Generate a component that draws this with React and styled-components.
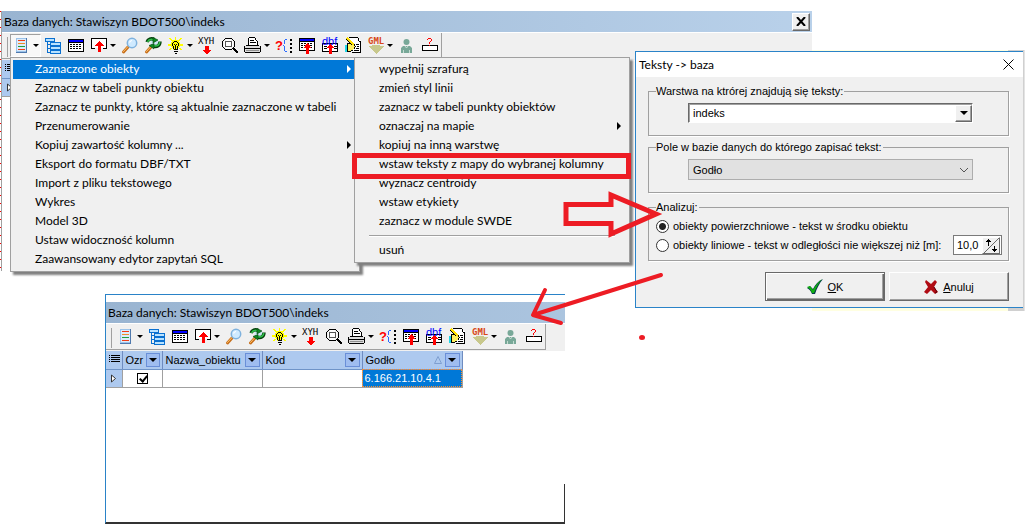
import React from 'react'
import styled, { createGlobalStyle, css } from 'styled-components'

const UI_FONT = 'Lato, "Open Sans", sans-serif'
const CLASSIC_FONT = '"Liberation Sans", Arial, sans-serif'

const FACE = '#f0f0f0'
const SHADOW = '#a0a0a0'
const BLUE = '#0078d7'
const FRAME = '#2a83c8'
const RED = '#ed1c24'

const GlobalStyle = createGlobalStyle`
  * { box-sizing: border-box; }
  body {
    margin: 0;
    background: #fff;
    color: #000;
    font-family: ${UI_FONT};
    font-size: 12px;
  }
  button, input, select { font: inherit; color: inherit; }
`

const Desktop = styled.main`
  position: relative;
  min-height: 100vh;
  overflow: hidden;
`

const MapEdge = styled.div`
  position: absolute;
  left: 0;
  top: 11px;
  width: 2px;
  height: 260px;
  background: repeating-linear-gradient(#f00 0 1px, #fff 1px 8px);
  border-right: 1px solid ${SHADOW};
`

const DataWindow = styled.section`
  position: absolute;
  background: #fff;
  ${({ $place }) =>
    $place === 'back'
      ? css`
          left: 2px;
          top: 11px;
          right: 21%;
          min-height: 260px;
        `
      : css`
          left: 105px;
          top: 294px;
          right: 45%;
          min-width: 460px;
          min-height: 230px;
          padding-top: 7px;
          border-top: 1px solid ${FRAME};
          border-left: 1px solid ${FRAME};
          border-bottom: 2px solid #333;

          &::after {
            content: '';
            position: absolute;
            right: 0;
            bottom: 0;
            height: 38px;
            border-right: 1px solid #333;
          }
        `};
`

const TitleBar = styled.header`
  display: flex;
  align-items: center;
  justify-content: space-between;
  height: 21px;
  padding: 0 2px;
  background: linear-gradient(90deg, #99b4d1, #b9d1ea) 0 0 / 812px 100%;
`

const WindowTitle = styled.h2`
  margin: 0;
  font-size: 12px;
  line-height: 20px;
  font-weight: normal;
  white-space: nowrap;
`

const RaisedClose = styled.button`
  display: grid;
  place-items: center;
  width: 18px;
  height: 18px;
  padding: 0;
  background: ${FACE};
  border: 1px solid;
  border-color: #fff #696969 #696969 #fff;
  box-shadow: inset -1px -1px ${SHADOW};
`

const ToolStrip = styled.div`
  height: 28px;
  background: ${FACE};
  border-top: 1px solid #fff;
`

const ToolGroup = styled.div`
  display: flex;
  width: max-content;
  height: 26px;
  padding: 1px 0 0 8px;
  border-right: 1px solid ${SHADOW};
  border-bottom: 1px solid ${SHADOW};
  background: linear-gradient(${SHADOW}, ${SHADOW}) 5px 4px / 1px 20px no-repeat;
`

const ToolButton = styled.button`
  display: flex;
  align-items: center;
  width: ${({ $split }) => ($split ? 31 : 23)}px;
  height: 23px;
  padding: 0 0 0 2px;
  border: 1px solid transparent;
  background: none;
  ${({ $pressed }) =>
    $pressed &&
    css`
      background: #f8f8f8;
      border-color: ${SHADOW} #fff #fff ${SHADOW};
    `};

  svg {
    flex: none;
    overflow: visible;
  }
`

const Caret = styled.span`
  flex: none;
  margin-left: ${({ $gap = 0 }) => $gap}px;
  border: 3px solid transparent;
  border-top-color: currentColor;
  border-bottom: 0;
`

const Menu = styled.ul`
  position: absolute;
  top: 57px;
  left: ${({ $left }) => $left}px;
  width: ${({ $width }) => $width}px;
  margin: 0;
  padding: 2px;
  list-style: none;
  background: ${FACE};
  border: 1px solid ${SHADOW};
  box-shadow: 3px 3px 2px #808080;
`

const MenuItem = styled.button`
  display: flex;
  align-items: center;
  justify-content: space-between;
  width: 100%;
  height: 19px;
  padding: 0 6px 2px 22px;
  border: 0;
  background: ${({ $active }) => ($active ? BLUE : 'transparent')};
  color: ${({ $active }) => ($active ? '#fff' : '#000')};
  text-align: left;
  white-space: nowrap;

  &::after {
    content: '';
    display: ${({ $sub }) => ($sub ? 'block' : 'none')};
    border: 4px solid transparent;
    border-left-color: currentColor;
    border-right: 0;
  }
`

const Separator = styled.li`
  height: 2px;
  margin: 4px 12px;
  border-top: 1px solid ${SHADOW};
  border-bottom: 1px solid #fff;
`

const Grid = styled.table`
  border-collapse: collapse;
  table-layout: fixed;
  width: ${({ $width }) => $width}px;
  font: 11px/14px ${CLASSIC_FONT};
`

const HeadCell = styled.th`
  width: ${({ $width }) => $width}px;
  height: 18px;
  padding: 0 2px 0 3px;
  background: #adc9ef;
  border-right: 1px solid #6f8cc0;
  border-bottom: 1px solid #6f94c8;
  font-weight: normal;
  text-align: left;
`

const HeadInner = styled.div`
  display: flex;
  align-items: center;
  gap: 3px;

  span:first-child {
    flex: 1;
    white-space: nowrap;
  }
`

const FilterButton = styled.button`
  display: grid;
  place-items: center;
  width: 15px;
  height: 14px;
  padding: 0;
  background: #9fbdf0;
  border: 1px solid #6a8fd8;
`

const FilterArrow = styled.span`
  border: 4px solid transparent;
  border-top-color: #000;
  border-bottom: 0;
`

const Cell = styled.td`
  height: 18px;
  padding: 0 2px;
  border-right: 1px solid ${SHADOW};
  border-bottom: 1px solid ${SHADOW};
  text-align: ${({ $center }) => ($center ? 'center' : 'left')};
  ${({ $marker }) => $marker && 'background: #adc9ef;'}
  ${({ $selected }) =>
    $selected &&
    css`
      background: ${BLUE};
      color: #fff;
      outline: 1px dotted #ff8c28;
      outline-offset: -1px;
    `};
`

const RowMarker = styled.svg`
  display: block;
  margin: 0 auto;
`

const Tick = styled.input`
  appearance: none;
  display: block;
  width: 11px;
  height: 11px;
  margin: 0 auto;
  border: 1px solid #000;
  background: #fff;

  &:checked::after {
    content: '';
    display: block;
    width: 3px;
    height: 6px;
    margin: 0 0 0 3px;
    border: solid #000;
    border-width: 0 2px 2px 0;
    transform: rotate(40deg);
  }
`

const Dialog = styled.section`
  position: absolute;
  left: 635px;
  top: 51px;
  right: 5px;
  background: ${FACE};
  border: 1px solid ${FRAME};
  border-right: 0;
`

const DialogBacking = styled.div`
  position: absolute;
  left: 812px;
  right: 4px;
  top: 50px;
  height: 261px;
  background: linear-gradient(90deg, #ffffe1 0 196px, #d0d0d0 196px);
`

const DialogEdge = styled.div`
  position: absolute;
  right: 3px;
  top: 50px;
  width: 1px;
  height: 261px;
  background: #e3e3e3;
`

const DialogTitle = styled.header`
  display: flex;
  align-items: center;
  justify-content: space-between;
  height: 25px;
  padding: 0 9px 0 3px;
  background: #fff;
`

const PlainClose = styled.button`
  display: grid;
  place-items: center;
  width: 12px;
  height: 12px;
  padding: 0;
  border: 0;
  background: none;
`

const Form = styled.form`
  display: flex;
  flex-direction: column;
  padding: 7px 14px 6px 12px;
  font: 11px/14px ${CLASSIC_FONT};
`

const Group = styled.fieldset`
  margin: 0 0 ${({ $after }) => $after}px;
  padding: 0 6px 0 7px;
  min-width: 0;
  border: 1px solid ${SHADOW};
  box-shadow: 1px 1px #fff;

  legend {
    margin: 0;
    padding: 0 1px 0 0;
  }
`

const Field = styled.div`
  padding: 5px 29px 12px 32px;
`

const Choices = styled.div`
  padding: 3px 0 5px;
`

const SelectBox = styled.div`
  display: grid;
  align-items: center;
  height: ${({ $flat }) => ($flat ? 21 : 20)}px;
  background: ${({ $flat }) => ($flat ? '#e1e1e1' : '#fff')};
  border: 1px solid;
  border-color: ${({ $flat }) => ($flat ? '#adadad' : '#696969 #fff #fff #696969')};
  ${({ $flat }) => !$flat && `box-shadow: inset 1px 1px ${SHADOW};`}

  > * {
    grid-area: 1 / 1;
  }

  select {
    appearance: none;
    width: 100%;
    height: 100%;
    padding: 0 20px 0 4px;
    border: 0;
    background: none;
  }

  svg {
    justify-self: end;
    margin-right: 3px;
    pointer-events: none;
  }
`

const DropFace = styled.span`
  justify-self: end;
  display: grid;
  place-items: center;
  width: 17px;
  height: 17px;
  background: ${FACE};
  border: 1px solid;
  border-color: #fff #696969 #696969 #fff;
  box-shadow: inset -1px -1px ${SHADOW};
  pointer-events: none;
`

const Row = styled.div`
  display: flex;
  align-items: center;
  justify-content: space-between;
  min-height: 18px;
`

const RadioLabel = styled.label`
  display: flex;
  align-items: center;
  gap: 4px;
  white-space: nowrap;
`

const Radio = styled.input`
  appearance: none;
  width: 13px;
  height: 13px;
  margin: 0;
  border: 1px solid #333;
  border-radius: 50%;
  background: #fff;

  &:checked {
    background: radial-gradient(#222 0 3px, #fff 4px);
  }
`

const Spinner = styled.div`
  display: flex;
  align-items: center;
  width: 49px;
  height: 20px;
  padding-right: 1px;
  background: #fff;
  border: 1px solid #7a7a7a;

  input {
    flex: 1;
    min-width: 0;
    padding: 0 3px;
    border: 0;
    background: none;
  }
`

const StepButton = styled.button`
  width: 18px;
  height: 17px;
  padding: 0;
  border: 1px solid;
  border-color: #fff #696969 #696969 #fff;
  background: ${FACE};

  svg {
    display: block;
  }
`

const Actions = styled.div`
  display: flex;
  justify-content: flex-end;
  gap: 4px;
`

const ActionButton = styled.button`
  display: flex;
  align-items: center;
  justify-content: center;
  gap: 5px;
  width: 120px;
  height: 29px;
  padding: 0;
  background: ${FACE};
  border: 1px solid;
  border-color: ${({ $primary }) => ($primary ? '#696969' : '#fff #696969 #696969 #fff')};
  box-shadow: ${({ $primary }) =>
    $primary
      ? 'inset 1px 1px #fff, inset -1px -1px #696969, inset -2px -2px #a0a0a0'
      : 'inset -1px -1px #a0a0a0'};
`

const Marks = styled.svg`
  position: absolute;
  inset: 0;
  width: 100%;
  height: 100%;
  pointer-events: none;
`

const Icon = ({ children, smooth }) => (
  <svg
    width='17'
    height='17'
    viewBox='0 0 17 17'
    fill='none'
    shapeRendering={smooth ? 'auto' : 'crispEdges'}
    aria-hidden='true'
  >
    {children}
  </svg>
)

const Handle = () => (
  <>
    <path d='M7 10 2.500 15' stroke='#c8701c' strokeWidth='3' strokeLinecap='round' />
    <path d='M7 9.500 2.500 14.500' stroke='#ffc36b' strokeLinecap='round' />
  </>
)

const icons = {
  list: (
    <Icon>
      <path d='M3 1h11v14H3z' fill='#9cc3ea' />
      <path d='M4 2h9v12H4z' fill='#dcebfa' />
      <path d='M3 15.500h11M13.500 1v14' stroke='#4f79ad' />
      <path d='M5 3.500h7' stroke='#f03c14' />
      <path d='M5 6.500h7' stroke='#f08c28' />
      <path d='M5 9.500h7' stroke='#1ea03c' />
      <path d='M5 12.500h7' stroke='#f03c14' />
    </Icon>
  ),
  tree: (
    <Icon>
      <path d='M1 1h10v4H1zM6 5h11v4H6zM6 9h11v4H6zM6 13h11v4H6z' fill='#0a70d0' />
      <path d='M2 2h8v2H2zM7 6h9v2H7zM7 10h9v2H7zM7 14h9v2H7z' fill='#b8e2ff' />
      <path d='M3.500 5v10.500h3M4 7.500h2M4 11.500h2' stroke='#0a70d0' />
    </Icon>
  ),
  table: (
    <Icon>
      <path d='M1 2h16v13H1z' fill='#000' />
      <path d='M2 3h14v2H2z' fill='#00f' />
      <path d='M2 6h14v8H2z' fill='#fff' />
      <path d='M3 7.500h12M3 9.500h12M3 11.500h12' stroke='#000' strokeDasharray='2 1' />
    </Icon>
  ),
  upload: (
    <Icon>
      <path d='M2 2h14v9H2z' fill='#fff' />
      <path d='M5 11.500H1.500V1.500H16.500V11.500H13' stroke='#000' />
      <path d='M9 4h1v1h1v1h1v1h1v1h1v1h-3v6H8V9H5V8h1V7h1V6h1V5h1z' fill='#f00' />
    </Icon>
  ),
  find: (
    <Icon smooth>
      <Handle />
      <circle cx='11' cy='6' r='4.700' fill='#cfeaff' stroke='#7fb2de' strokeWidth='1.500' />
      <path d='M8.500 5.500a3 3 0 0 1 2.500-2' stroke='#fff' strokeWidth='1.200' />
    </Icon>
  ),
  findNext: (
    <Icon smooth>
      <Handle />
      <circle cx='10.500' cy='5.500' r='4' fill='#c9e8f2' />
      <path d='M3 5c1-3 4-4 7.500-2.500M16 4.500c0 4-3 6-7 4.500' stroke='#04400c' strokeWidth='3.400' />
      <path d='M3.500 4.800c1-2 3.500-3 7-1.800M15.700 5c0 3-2.500 4.500-6 3.700' stroke='#2fc04a' strokeWidth='1.600' />
      <path d='M9 .500l5 2.500-5 3zM10 6.500l-5 2 5 3.500z' fill='#0d8a22' stroke='#04400c' strokeWidth='.600' />
    </Icon>
  ),
  bulb: (
    <Icon>
      <path
        d='M8 0h1v3H8zM2 1h2v1h1v1h1v1H4V3H3V2H2zM13 1h2v1h-1v1h-1v1h-2V3h1V2h1zM1 7h3v2H1zM13 7h3v2h-3zM2 12h1v-1h2v1H4v1H2zM12 11h2v1h1v1h-2v-1h-1z'
        fill='#ff0'
      />
      <path d='M5 3h7v2h1v5h-1v1h-1v2H6v-2H5v-1H4V5h1z' fill='#ff0' />
      <path
        d='M7 4.500h3M5.500 6v3M11.500 6v3M6.500 5v1M10.500 5v1M6.500 9v3M10.500 9v3M7 12.500h4M7 14.500h4M8 16.500h2M7.500 7v1M9.500 7v1M8.500 8v4'
        stroke='#000'
      />
    </Icon>
  ),
  xyh: (
    <Icon>
      <text x='0' y='7' fontFamily='DejaVu Sans Mono, monospace' fontSize='9' fill='#000'>XYH</text>
      <path d='M7 9h4v4h2v1h-1v1h-1v1h-1v1H8v-1H7v-1H6v-1H5v-1h2z' fill='#f00' />
    </Icon>
  ),
  lens: (
    <Icon>
      <path d='M5 2h5v2h2v6h-2v2H5v-2H3V4h2z' fill='#fff' />
      <path
        d='M4 1.500h7M3 2.500h1M11 2.500h1M1.500 4v6M2.500 3v1M2.500 10v1M12.500 3v1M12.500 10v1M13.500 4v6M3 11.500h1M11 11.500h1M4 12.500h7'
        stroke='#000'
      />
      <path d='M4.500 4.500h6v5h-6z' stroke='#555' />
      <path d='M12 11h2v1h1v1h1v1h1v2h-2v-1h-1v-1h-1v-1h-1z' fill='#000' />
    </Icon>
  ),
  printer: (
    <Icon>
      <path d='M5 1h6l2 2v5H4z' fill='#fff' />
      <path d='M5 .500h6M4.500 1v7M11.500 1v2M12 3.500h1M13.500 4v4M6 3.500h4M6 5.500h6' stroke='#000' />
      <path d='M1 9h15v6H1z' fill='#dcdcdc' />
      <path d='M2 8.500h13M1 11.500h15M.500 9v6M16.500 9v6M1 15.500h15' stroke='#000' />
      <path d='M2 13.500h13' stroke='#909090' />
    </Icon>
  ),
  query: (
    <Icon>
      <text x='0' y='13' fontFamily='Liberation Sans, sans-serif' fontSize='13' fontWeight='bold' fill='#f00'>?</text>
      <path d='M12 2.500h-2M9.500 3v4M9 8.500H8M9.500 9v5M10 14.500h2' stroke='#2a6bff' />
      <path d='M15 2h2v2h-2zM15 6h2v2h-2zM15 10h2v2h-2zM15 14h2v2h-2z' fill='#000' />
    </Icon>
  ),
  tableUp: (
    <Icon>
      <path d='M1 1h16v13H1z' fill='#000' />
      <path d='M2 2h14v2H2z' fill='#00f' />
      <path d='M2 5h14v8H2z' fill='#fff' />
      <path d='M3 6.500h12M3 8.500h12M3 10.500h12' stroke='#000' strokeDasharray='2 1' />
      <path d='M9 6h1v1h1v1h1v2h1v1h-2v6H8v-6H6v-1h1V8h1V7h1z' fill='#f00' />
    </Icon>
  ),
  dbf: (
    <Icon>
      <path d='M1.500 6.500h15v8h-15z' fill='#fff' stroke='#000' />
      <path d='M3 9.500h3M13 9.500h3M3 11.500h3M13 11.500h3' stroke='#000' />
      <text x='1' y='8' fontFamily='Liberation Sans, sans-serif' fontSize='11' fill='#00f'>dbf</text>
      <path d='M9 7h1v1h1v1h1v1h1v1h-2v6H8v-6H6v-1h1V9h1V8h1z' fill='#f00' />
    </Icon>
  ),
  edit: (
    <Icon>
      <path d='M6 1h8l3 3v11H6z' fill='#fff' />
      <path d='M5 .500h9M14.500 1v3M15 4.500h2M16.500 5v10M8 15.500h9M12 7.500h3M13 9.500h2M12 11.500h3M10 13.500h5' stroke='#000' />
      <path d='M1 8h2v7H1z' fill='#20d8e8' />
      <path d='M3.500 6.500h6l2 3-2 3-3 2h-3z' fill='#fff060' stroke='#000' />
      <path d='M2 2l6 6M4 1l6 6' stroke='#000' />
      <path d='M3 1l7 7' stroke='#ffe000' strokeWidth='2' />
    </Icon>
  ),
  gml: (
    <Icon>
      <path d='M5 8h8v1h4l-8 8-8-8h4z' fill='#c8c88c' />
      <text x='1' y='7' fontFamily='DejaVu Sans Mono, monospace' fontSize='9' fontWeight='bold' fill='#d84818'>GML</text>
    </Icon>
  ),
  person: (
    <Icon smooth>
      <circle cx='8.500' cy='5' r='3' fill='#78a898' />
      <path d='M5 9h7l2 2v5H3v-5z' fill='#78a898' />
      <path d='M7 9l1.500 2L10 9M5.500 13v3M11.500 13v3' stroke='#d8e8e0' strokeWidth='.800' />
    </Icon>
  ),
  ask: (
    <Icon>
      <path d='M1.500 8.500h15v5h-15z' fill='#fff' stroke='#000' />
      <path d='M6 2.500h1M7 1.500h3M10.500 2v2M9.500 4v1M8.500 5v2' stroke='#f00' />
      <path d='M8 8h1v1H8z' fill='#f00' />
    </Icon>
  )
}

const tools = [
  { id: 'list', label: 'Obiekty', split: true },
  { id: 'tree', label: 'Drzewo' },
  { id: 'table', label: 'Tabela' },
  { id: 'upload', label: 'Wczytaj', split: true },
  { id: 'find', label: 'Szukaj' },
  { id: 'findNext', label: 'Szukaj ponownie' },
  { id: 'bulb', label: 'Podświetl', split: true },
  { id: 'xyh', label: 'Współrzędne XYH' },
  { id: 'lens', label: 'Pokaż na mapie' },
  { id: 'printer', label: 'Drukuj', split: true },
  { id: 'query', label: 'Zapytanie' },
  { id: 'tableUp', label: 'Eksport tabeli' },
  { id: 'dbf', label: 'Eksport DBF' },
  { id: 'edit', label: 'Edycja' },
  { id: 'gml', label: 'GML', split: true },
  { id: 'person', label: 'Użytkownik' },
  { id: 'ask', label: 'Pomoc' }
]

const mainMenu = [
  { text: 'Zaznaczone obiekty', sub: true, active: true },
  { text: 'Zaznacz w tabeli punkty obiektu' },
  { text: 'Zaznacz te punkty, które są aktualnie zaznaczone w tabeli' },
  { text: 'Przenumerowanie' },
  { text: 'Kopiuj zawartość kolumny ...', sub: true },
  { text: 'Eksport do formatu DBF/TXT' },
  { text: 'Import z pliku tekstowego' },
  { text: 'Wykres' },
  { text: 'Model 3D' },
  { text: 'Ustaw widoczność kolumn' },
  { text: 'Zaawansowany edytor zapytań SQL' }
]

const subMenu = [
  { text: 'wypełnij szrafurą' },
  { text: 'zmień styl linii' },
  { text: 'zaznacz w tabeli punkty obiektów' },
  { text: 'oznaczaj na mapie', sub: true },
  { text: 'kopiuj na inną warstwę' },
  { text: 'wstaw teksty z mapy do wybranej kolumny' },
  { text: 'wyznacz centroidy' },
  { text: 'wstaw etykiety' },
  { text: 'zaznacz w module SWDE' },
  null,
  { text: 'usuń' }
]

const Toolbar = ({ pressed }) => (
  <ToolStrip>
    <ToolGroup role='toolbar'>
      {tools.map(({ id, label, split }) => (
        <ToolButton key={id} type='button' aria-label={label} $split={split} $pressed={id === pressed}>
          {icons[id]}
          {split && <Caret $gap={3} />}
        </ToolButton>
      ))}
    </ToolGroup>
  </ToolStrip>
)

const PopupMenu = ({ items, left, width }) => (
  <Menu $left={left} $width={width}>
    {items.map((item, i) =>
      item ? (
        <li key={item.text}>
          <MenuItem type='button' $active={item.active} $sub={item.sub}>
            {item.text}
          </MenuItem>
        </li>
      ) : (
        <Separator key={i} />
      )
    )}
  </Menu>
)

const RowsIcon = () => (
  <svg width='11' height='10' shapeRendering='crispEdges' aria-hidden='true'>
    <path d='M0 1.500h1M2 1.500h9M0 3.500h1M2 3.500h9M0 5.500h1M2 5.500h9M0 7.500h1M2 7.500h9' stroke='#000' />
  </svg>
)

const CurrentRowIcon = () => (
  <RowMarker width='7' height='9' aria-hidden='true'>
    <path d='M1.500 1v7l4-3.500z' fill='#fff' stroke='#333' />
  </RowMarker>
)

const Column = ({ title, width, sorted }) => (
  <HeadCell $width={width} scope='col'>
    <HeadInner>
      <span>{title}</span>
      {sorted && (
        <svg width='8' height='8' aria-hidden='true'>
          <path d='M.500 7.500h7L4 .500z' fill='none' stroke='#7f9fd0' />
        </svg>
      )}
      <FilterButton type='button' aria-label={`Filtruj ${title}`}>
        <FilterArrow />
      </FilterButton>
    </HeadInner>
  </HeadCell>
)

const Results = () => (
  <Grid $width={356}>
    <thead>
      <tr>
        <HeadCell $width={16}><RowsIcon /></HeadCell>
        <Column title='Ozr' width={40} />
        <Column title='Nazwa_obiektu' width={100} />
        <Column title='Kod' width={100} />
        <Column title='Godło' width={100} sorted />
      </tr>
    </thead>
    <tbody>
      <tr>
        <Cell $marker><CurrentRowIcon /></Cell>
        <Cell $center><Tick type='checkbox' aria-label='Ozr' defaultChecked /></Cell>
        <Cell />
        <Cell />
        <Cell $selected>6.166.21.10.4.1</Cell>
      </tr>
    </tbody>
  </Grid>
)

const TextsDialog = () => (
  <Dialog role='dialog' aria-label='Teksty -> baza'>
    <DialogTitle>
      <WindowTitle>Teksty -&gt; baza</WindowTitle>
      <PlainClose type='button' aria-label='Zamknij'>
        <svg width='11' height='11' aria-hidden='true'>
          <path d='M.500 .500l10 10M10.500 .500l-10 10' stroke='#000' />
        </svg>
      </PlainClose>
    </DialogTitle>
    <Form onSubmit={e => e.preventDefault()}>
      <Group $after={4}>
        <legend>Warstwa na ktrórej znajdują się teksty:</legend>
        <Field>
          <SelectBox>
            <select aria-label='Warstwa na ktrórej znajdują się teksty'>
              <option>indeks</option>
            </select>
            <DropFace><FilterArrow /></DropFace>
          </SelectBox>
        </Field>
      </Group>
      <Group $after={7}>
        <legend>Pole w bazie danych do którego zapisać tekst:</legend>
        <Field>
          <SelectBox $flat>
            <select aria-label='Pole w bazie danych do którego zapisać tekst'>
              <option>Godło</option>
            </select>
            <svg width='10' height='6' fill='none' aria-hidden='true'>
              <path d='M1 1l4 4 4-4' stroke='#555' />
            </svg>
          </SelectBox>
        </Field>
      </Group>
      <Group $after={11}>
        <legend>Analizuj:</legend>
        <Choices>
          <Row>
            <RadioLabel>
              <Radio type='radio' name='mode' defaultChecked />
              obiekty powierzchniowe - tekst w środku obiektu
            </RadioLabel>
          </Row>
          <Row>
            <RadioLabel>
              <Radio type='radio' name='mode' />
              obiekty liniowe - tekst w odległości nie większej niż [m]:
            </RadioLabel>
            <Spinner>
              <input aria-label='Odległość [m]' defaultValue='10,0' />
              <StepButton type='button' aria-label='Zmień odległość'>
                <svg width='16' height='15' shapeRendering='crispEdges' aria-hidden='true'>
                  <path d='M1 15L16 0' stroke='#696969' />
                  <path d='M5 1h1v1h1v1h1v1H6v4H5V4H3V3h1V2h1zM11 8h1v3h2v1h-1v1h-1v1h-1v-1h-1v-1H9v-1h2z' fill='#000' />
                </svg>
              </StepButton>
            </Spinner>
          </Row>
        </Choices>
      </Group>
      <Actions>
        <ActionButton type='submit' $primary>
          <svg width='16' height='16' aria-hidden='true'>
            <path d='M0 9l3-2 3 3c2-4 5-8 10-10-4 5-6 9-8 15H5C4 12 2 10 0 9z' fill='#063a4a' />
            <path d='M0 8l3-1 3 4c2-4 5-8 9-11-4 5-6 9-8 14H5C4 11 2 9 0 8z' fill='#10b010' />
          </svg>
          <span><u>O</u>K</span>
        </ActionButton>
        <ActionButton type='button'>
          <svg width='14' height='14' aria-hidden='true'>
            <path d='M2 0l5 4 4-4 2 2-3 5 4 5-3 2-4-4-4 4-3-2 4-5-3-5z' fill='#b00c14' />
            <path d='M11 13l2-1-3-5' fill='none' stroke='#5a0008' />
          </svg>
          <span><u>A</u>nuluj</span>
        </ActionButton>
      </Actions>
    </Form>
  </Dialog>
)

const Annotations = () => (
  <Marks fill='none' stroke={RED} aria-hidden='true'>
    <rect x='354.500' y='155.500' width='274' height='21' strokeWidth='5' shapeRendering='crispEdges' />
    <path d='M566 204.500H611V195L656 214 611 234V223.500H566z' strokeWidth='5' />
    <path d='M661 275L533 315M545 290L533 315 561 323' strokeWidth='4' strokeLinecap='round' strokeLinejoin='round' />
    <ellipse cx='642' cy='337.500' rx='3' ry='2.500' fill={RED} stroke='none' />
  </Marks>
)

export default function App () {
  return (
    <Desktop>
      <GlobalStyle />
      <MapEdge />
      <DataWindow $place='back'>
        <TitleBar>
          <WindowTitle>Baza danych: Stawiszyn BDOT500\indeks</WindowTitle>
          <RaisedClose type='button' aria-label='Zamknij'>
            <svg width='10' height='9' aria-hidden='true'>
              <path d='M1 0l8 9M9 0L1 9' stroke='#000' strokeWidth='2' />
            </svg>
          </RaisedClose>
        </TitleBar>
        <Toolbar pressed='list' />
        <Grid $width={16}>
          <thead><tr><HeadCell $width={16}><RowsIcon /></HeadCell></tr></thead>
          <tbody><tr><Cell $marker><CurrentRowIcon /></Cell></tr></tbody>
        </Grid>
      </DataWindow>
      <DataWindow $place='front'>
        <TitleBar>
          <WindowTitle>Baza danych: Stawiszyn BDOT500\indeks</WindowTitle>
        </TitleBar>
        <Toolbar />
        <Results />
      </DataWindow>
      <PopupMenu items={mainMenu} left={10} width={350} />
      <PopupMenu items={subMenu} left={354} width={276} />
      <DialogBacking />
      <TextsDialog />
      <DialogEdge />
      <Annotations />
    </Desktop>
  )
}
